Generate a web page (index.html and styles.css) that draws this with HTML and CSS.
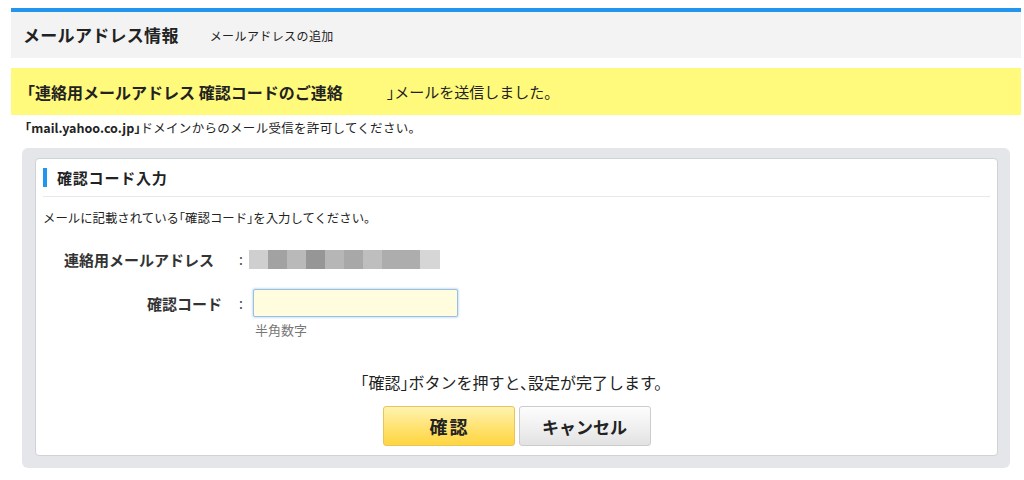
FILE: index.html
```html
<!DOCTYPE html>
<html lang="ja">
<head>
<meta charset="utf-8">
<title>メールアドレス情報</title>
<link rel="stylesheet" href="styles.css">
</head>
<body>
<div class="page">
  <header class="head">
    <h1 class="head-title">メールアドレス情報</h1>
    <span class="head-sub">メールアドレスの追加</span>
  </header>

  <div class="notice">
    <span class="notice-strong">「連絡用メールアドレス 確認コードのご連絡</span><span class="notice-rest">」メールを送信しました。</span>
  </div>

  <p class="domain"><b>「mail.yahoo.co.jp」</b>ドメインからのメール受信を許可してください。</p>

  <section class="frame">
    <div class="card">
      <h2 class="card-title">確認コード入力</h2>
      <p class="desc">メールに記載されている「確認コード」を入力してください。</p>

      <div class="row row-first">
        <div class="label label-wide">連絡用メールアドレス</div>
        <div class="colon">:</div>
        <div class="mosaic">
          <span class="m m1"></span><span class="m m2"></span><span class="m m3"></span><span class="m m4"></span><span class="m m5"></span><span class="m m6"></span><span class="m m7"></span><span class="m m8"></span><span class="m m8"></span><span class="m m9"></span>
        </div>
      </div>

      <div class="row row-second">
        <div class="label">確認コード</div>
        <div class="colon">:</div>
        <input class="code-input" type="text">
      </div>
      <div class="hint">半角数字</div>

      <p class="message">「確認」ボタンを押すと、設定が完了します。</p>

      <div class="buttons">
        <button class="btn btn-primary" type="button">確認</button>
        <button class="btn btn-cancel" type="button">キャンセル</button>
      </div>
    </div>
  </section>
</div>
</body>
</html>
```

FILE: styles.css
```css
* { box-sizing: border-box; }

body {
  margin: 0;
  background: #ffffff;
  color: #222222;
  font-family: "Noto Sans CJK JP", "Noto Sans", sans-serif;
}

.page {
  margin: 8px 3px 0 11px;
  width: 1010px;
}

.head {
  border-top: 4px solid #2295ee;
  background: #f3f3f3;
  height: 50px;
  display: flex;
  align-items: center;
  padding-left: 12px;
}

.head-title {
  margin: 0;
  font-size: 17px;
  font-weight: 700;
  letter-spacing: 0.3px;
  line-height: 20px;
}

.head-sub {
  margin-left: 31px;
  font-size: 12px;
  letter-spacing: 0.4px;
  line-height: 16px;
  padding-top: 2px;
}

.notice {
  margin-top: 10px;
  height: 47px;
  background: #fffa7c;
  display: flex;
  align-items: center;
  padding-left: 16px;
  font-feature-settings: "halt";
}

.notice-strong {
  font-size: 16px;
  font-weight: 700;
}

.notice-rest {
  margin-left: 44px;
  font-size: 15px;
}

.domain {
  margin: 6px 0 0 14px;
  font-size: 12.5px;
  letter-spacing: 0.3px;
  line-height: 14px;
  font-feature-settings: "halt";
}

.domain b { font-weight: 700; letter-spacing: 0; }

.frame {
  margin: 13px 0 0 11px;
  width: 988px;
  height: 320px;
  background: #e4e6ea;
  border-radius: 6px;
  padding: 10px 12px 12px 13px;
}

.card {
  height: 298px;
  background: #ffffff;
  border: 1px solid #cfd2d6;
  border-radius: 4px;
  padding: 0 7px;
}

.card-title {
  margin: 0;
  height: 38px;
  border-bottom: 1px solid #e8e8e8;
  display: flex;
  align-items: center;
  font-size: 15px;
  font-weight: 700;
  letter-spacing: 0.8px;
}

.card-title::before {
  content: "";
  width: 4px;
  height: 19px;
  background: #2295ee;
  margin-right: 10px;
}

.desc {
  margin: 0;
  padding-top: 14px;
  font-size: 12.4px;
  line-height: 14px;
  font-feature-settings: "halt";
}

.row {
  display: flex;
  align-items: center;
  height: 28px;
}

.row-first { margin-top: 20px; }
.row-second { margin-top: 16px; }

.label {
  width: 179px;
  text-align: right;
  font-size: 15px;
  font-weight: 700;
  color: #333333;
}

.label-wide { padding-right: 8px; }

.colon {
  width: 27px;
  padding-left: 17px;
  font-size: 14px;
  color: #444444;
}

.mosaic {
  display: flex;
  height: 19px;
}

.m { width: 19px; height: 19px; display: block; }
.m1 { background: #cfcfcf; }
.m2 { background: #a2a2a2; }
.m3 { background: #b9b9b9; }
.m4 { background: #969696; }
.m5 { background: #b6b6b6; }
.m6 { background: #a8a8a8; }
.m7 { background: #bebebe; }
.m8 { background: #adadad; }
.m9 { background: #d6d6d6; width: 20px; }

.code-input {
  margin: 0 0 0 4px;
  width: 205px;
  height: 28px;
  background: #fffddd;
  border: 1px solid #9cbfe0;
  border-radius: 2px;
  box-shadow: 0 0 2px 1px #cfe3f7;
  padding: 0 6px;
  font-size: 13px;
}

.hint {
  margin: 6px 0 0 212px;
  font-size: 13px;
  line-height: 14px;
  color: #777777;
}

.message {
  margin: 36px 0 0;
  padding-right: 10px;
  text-align: center;
  font-size: 16px;
  line-height: 18px;
  font-feature-settings: "halt";
}

.buttons {
  margin-top: 15px;
  display: flex;
  justify-content: center;
  gap: 4px;
}

.btn {
  width: 132px;
  height: 40px;
  border-radius: 3px;
  font-family: inherit;
  font-size: 17px;
  font-weight: 700;
  color: #222222;
  padding: 0;
}

.btn-primary {
  background: linear-gradient(#fff3b0, #ffe06a 60%, #ffd640);
  border: 1px solid #e6c55a;
  font-size: 18px;
  letter-spacing: 2px;
  text-indent: 2px;
}

.btn-cancel {
  background: linear-gradient(#fdfdfd, #eeeeee 60%, #e2e2e2);
  border: 1px solid #cccccc;
}
```
